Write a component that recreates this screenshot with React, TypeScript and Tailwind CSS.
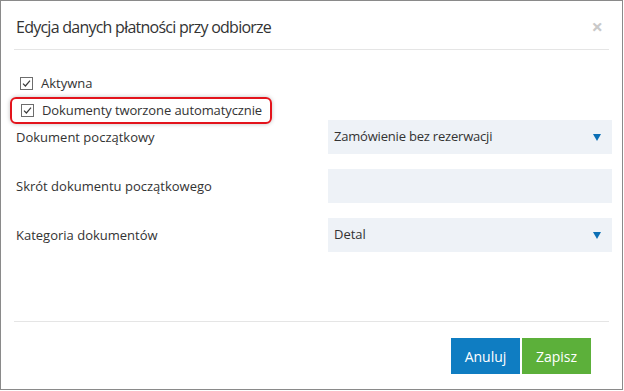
import React from "react";

function Check() {
  return (
    <span className="flex h-[13px] w-[13px] shrink-0 items-center justify-center border border-[#6d6d6d] bg-white">
      <svg width="11" height="11" viewBox="0 0 11 11">
        <path d="M2 5.6 L4.4 8 L9 2.6" fill="none" stroke="#3a3a3a" strokeWidth="1.2" />
      </svg>
    </span>
  );
}

function Arrow() {
  return (
    <svg width="8" height="7" viewBox="0 0 8 7">
      <path d="M0 0 H8 L4 7 Z" fill="#0b6fb5" />
    </svg>
  );
}

export default function App() {
  return (
    <div
      className="h-[391px] w-[624px] bg-white"
      style={{ fontFamily: '"Open Sans", "Noto Sans", sans-serif' }}
    >
      <div className="flex h-[390px] w-[623px] flex-col border border-[#8a8a8a] text-[#333]">
        {/* header */}
        <div className="mx-[13px] flex h-[49px] items-center justify-between border-b border-[#e5e5e5] pl-[2px] pr-[6px] pt-[3px]">
          <h1 className="text-[16px] leading-none tracking-[-0.75px] text-[#333]">Edycja danych płatności przy odbiorze</h1>
          <span className="text-[20px] font-bold leading-none text-[#c9c9c9]">×</span>
        </div>

        {/* body */}
        <div className="flex flex-1 flex-col px-[14px]">
          <label className="mt-[27px] flex items-center gap-[8px] pl-[5px] text-[13px] leading-none">
            <Check />
            <span>Aktywna</span>
          </label>
          <div className="-ml-[5px] mt-[7px] flex h-[27px] w-[262px] items-center gap-[8px] rounded-[6px] border-2 border-[#e3141c] pl-[9px] text-[13px] leading-none shadow-[0_0_4px_rgba(0,0,0,0.25)]">
            <Check />
            <span className="tracking-[-0.1px]">Dokumenty tworzone automatycznie</span>
          </div>

          <div className="mt-[-4px] grid grid-cols-[313px_284px] gap-y-[15px] text-[13px]">
            <div className="flex h-[34px] items-center pl-[1px] pt-[2px]">Dokument początkowy</div>
            <div className="flex h-[34px] items-center justify-between bg-[#eef2f7] pl-[6px] pr-[11px]">
              <span className="tracking-[-0.2px]">Zamówienie bez rezerwacji</span>
              <Arrow />
            </div>

            <div className="flex h-[34px] items-center pl-[1px] pt-[2px]">Skrót dokumentu początkowego</div>
            <div className="h-[34px] bg-[#eef2f7]" />

            <div className="flex h-[34px] items-center pl-[1px] pt-[2px]">Kategoria dokumentów</div>
            <div className="flex h-[34px] items-center justify-between bg-[#eef2f7] pl-[6px] pr-[11px]">
              <span>Detal</span>
              <Arrow />
            </div>
          </div>
        </div>

        {/* footer */}
        <div className="mx-[13px] mb-[15px] flex justify-end gap-[2px] border-t border-[#e5e5e5] pr-[18px] pt-[16px]">
          <button className="h-[36px] w-[69px] bg-[#0f7dc2] text-[14px] text-white">Anuluj</button>
          <button className="h-[36px] w-[69px] bg-[#5cb03a] text-[14px] text-white">Zapisz</button>
        </div>
      </div>
    </div>
  );
}
